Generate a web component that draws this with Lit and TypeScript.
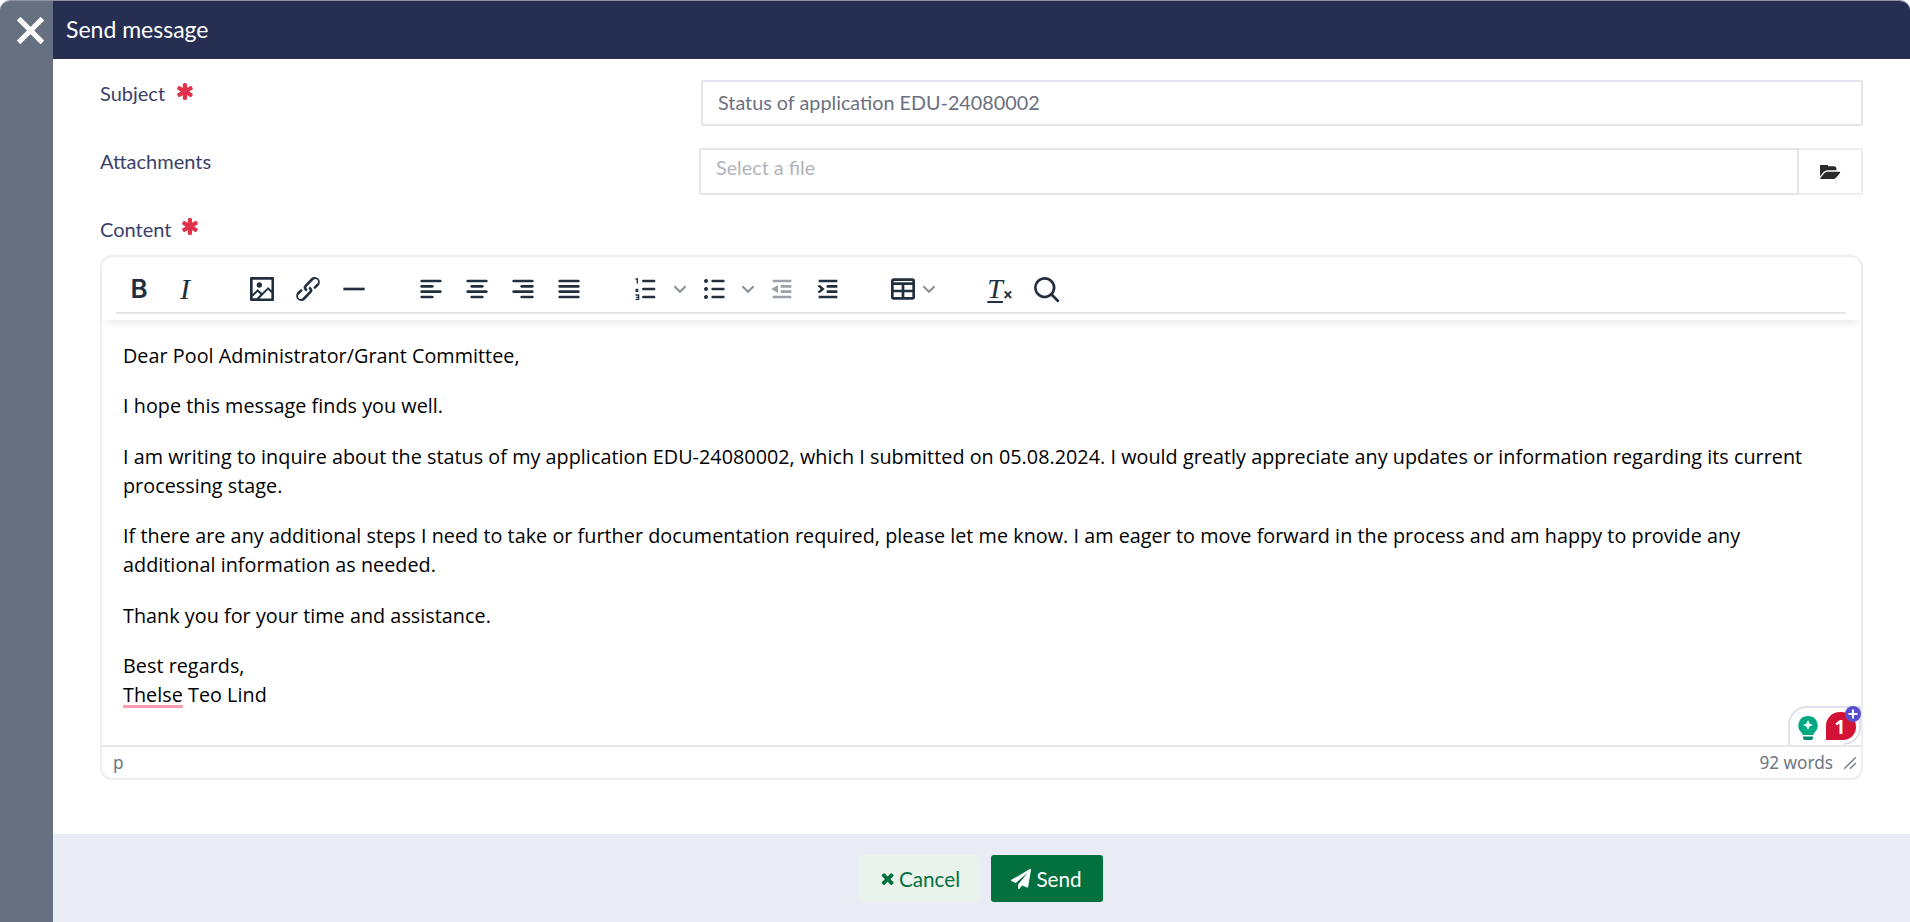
import { LitElement, html, css, svg } from "lit";
import { customElement } from "lit/decorators.js";

const p = (d: string, cls = "") => html`<svg class="ic ${cls}" viewBox="0 0 24 24" width="32" height="32"><path d=${d}></path></svg>`;
const bars = (rows: [number, number, number][]) =>
  html`<svg class="ic" viewBox="0 0 24 24" width="32" height="32">${rows.map(([x, y, w]) => svg`<rect x=${x} y=${y} width=${w} height="2" rx="1"></rect>`)}</svg>`;

const chev = html`<svg class="chev" viewBox="0 0 10 10" width="14" height="14"><path d="M1 3 L5 7 L9 3" fill="none" stroke="#8a9097" stroke-width="1.4"></path></svg>`;
const star = html`<svg class="star" viewBox="170 120 1460 1552" width="16" height="17"><path fill="#e0324b" d="M1546 1050q46 26 59.500 77.500t-12.500 97.500l-64 110q-26 46-77.500 59.500t-97.500-12.500l-266-153v307q0 52-38 90t-90 38h-128q-52 0-90-38t-38-90v-307l-266 153q-46 26-97.500 12.500t-77.500-59.500l-64-110q-26-46-12.500-97.500t59.500-77.500l266-154-266-154q-46-26-59.500-77.500t12.500-97.500l64-110q26-46 77.500-59.500t97.500 12.500l266 153v-307q0-52 38-90t90-38h128q52 0 90 38t38 90v307l266-153q46-26 97.500-12.500t77.500 59.500l64 110q26 46 12.500 97.500t-59.500 77.500l-266 154z"></path></svg>`;

@customElement("app-root")
export class AppRoot extends LitElement {
  static styles = css`
    :host { display: block; width: 1910px; height: 922px; background: #fff; overflow: hidden; font-family: Lato, "Noto Sans", sans-serif; }
    .window { display: flex; height: 922px; box-sizing: border-box; border-top: 1px solid #9094a6; border-radius: 10px 10px 0 0; overflow: hidden; }
    .strip { width: 53px; flex: none; background: #667080; display: flex; justify-content: center; padding: 16px 0 0 8px; box-sizing: border-box; }
    .strip svg { width: 27px; height: 27px; }
    .main { flex: 1; min-width: 0; display: flex; flex-direction: column; }
    .head { height: 58px; flex: none; background: #262e52; color: #fff; font-size: 23px; line-height: 56px; padding-left: 13px; }
    .body { flex: 1; padding: 21px 47px 0; display: flex; flex-direction: column; }
    .row { display: grid; grid-template-columns: 601px 1fr; }
    .row + .row { margin-top: 22px; }
    .label { color: #3a4168; font-size: 20px; line-height: 24px; display: flex; align-items: flex-start; }
    .row .label { margin-top: 1px; }
    .star { margin-left: 12px; margin-top: 2px; flex: none; }
    .input { height: 46px; box-sizing: border-box; border: 2px solid #e2e5ec; border-radius: 2px; padding-left: 15px; color: #6b7080; font-size: 19.800px; line-height: 40px; }
    .file { display: flex; height: 47px; margin-left: -2px; }
    .file .input { flex: 1; height: 47px; border-radius: 2px 0 0 2px; color: #b0b3ba; line-height: 34px; }
    .file .btn { width: 64px; box-sizing: border-box; border: 2px solid #ebedf5; border-left: 0; border-radius: 0 2px 2px 0; display: flex; align-items: center; justify-content: center; }
    .content-label { margin-top: 22px; height: 38px; }
    .content-label .star { margin-left: 11px; margin-top: 1px; }
    .editor { position: relative; height: 525px; box-sizing: border-box; border: 2px solid #eeeeee; border-radius: 12px; display: flex; flex-direction: column; }
    .tbar { height: 63px; flex: none; box-shadow: 0 6px 8px -4px rgba(30,40,50,.12); padding: 0 15px 0 14px; position: relative; border-radius: 10px 10px 0 0; }
    .tools { display: flex; height: 57px; box-sizing: border-box; border-bottom: 2px solid #e4e6e8; padding-top: 8px; align-items: center; }
    .group { display: flex; align-items: center; margin-right: 31px; }
    .group.tg { margin-left: -2px; margin-right: 37px; }
    .b { width: 46px; height: 46px; display: flex; align-items: center; justify-content: center; color: #222f3e; flex: none; }
    .b.dim { color: #9ba1a8; }
    .ic { fill: currentColor; display: block; }
    .chev { display: block; flex: none; width: 22px; }
    .tbl { margin-right: -8px; }
    .glyph-b { font: 600 26px Inter, sans-serif; }
    .glyph-i { font: italic 400 30px "Liberation Serif", serif; }
    .glyph-t { font: italic 400 28px "Liberation Serif", serif; text-decoration: underline; text-underline-offset: 3px; text-decoration-thickness: 2px; }
    .glyph-x { font: 700 17px "Noto Sans", sans-serif; align-self: flex-end; margin: 0 0 6px 0; }
    .text { flex: 1; padding: 21px 36px 0 21px; color: #000; font-family: "Open Sans", "Noto Sans", sans-serif; font-size: 19.750px; letter-spacing: .04px; line-height: 29px; overflow: hidden; }
    .text p { margin: 0 0 21.400px; }
    .sp { text-decoration: underline; text-decoration-color: #ff9ab0; text-decoration-thickness: 3px; text-underline-offset: 3px; }
    .status { height: 33px; box-sizing: border-box; flex: none; border-top: 2px solid #e4e6e8; display: flex; justify-content: space-between; align-items: center; padding: 0 4px 0 11px; color: #6d7583; font: 17.200px "Noto Sans", sans-serif; }
    .status .right { display: flex; align-items: center; gap: 10px; }
    .gram { position: absolute; left: 1686px; top: 449px; width: 73px; height: 39px; }
    .foot { height: 88px; flex: none; background: #e9ecf4; display: flex; justify-content: center; gap: 11px; padding: 21px 2px 0 0; box-sizing: border-box; }
    .fb { height: 47px; box-sizing: border-box; border-radius: 3px; display: flex; align-items: center; font-size: 20.700px; gap: 5px; }
    .cancel { width: 121px; background: #e9f3ec; color: #03713f; justify-content: center; padding-left: 3px; }
    .send { width: 112px; background: #03713f; color: #fff; justify-content: center; }
    .fb svg { fill: currentColor; display: block; }
  `;

  render() {
    return html`<div class="window">
      <div class="strip"><svg viewBox="0 0 24 24"><path d="M3 3L21 21M21 3L3 21" stroke="#fff" stroke-width="4.500" stroke-linecap="square"></path></svg></div>
      <div class="main">
        <div class="head">Send message</div>
        <div class="body">
          <div class="row"><div class="label">Subject ${star}</div><div class="input">Status of application EDU-24080002</div></div>
          <div class="row"><div class="label">Attachments</div><div class="file"><div class="input">Select a file</div><div class="btn">
            <svg viewBox="0 256 1920 1280" width="21" height="14"><path fill="#2e2a2b" d="M1845 931q0 35-53 93l-336 396q-43 51-120.500 86.500t-143.500 35.500h-1088q-34 0-60.500-13t-26.500-43q0-35 53-93l336-396q43-51 120.500-86.500t143.500-35.500h1088q34 0 60.500 13t26.500 43zm-343-344v160h-832q-94 0-197 47.500t-164 119.500l-337 396-5 6q0-4-.5-12.500t-.5-12.500v-960q0-92 66-158t158-66h320q92 0 158 66t66 158v32h544q92 0 158 66t66 158z"></path></svg>
          </div></div></div>
          <div class="label content-label">Content ${star}</div>
          <div class="editor">
            <div class="tbar"><div class="tools">
              <div class="group"><div class="b"><span class="glyph-b">B</span></div><div class="b"><span class="glyph-i">I</span></div></div>
              <div class="group">
                <div class="b">${p("m5 15.7 3.3-3.2c.3-.3.7-.3 1 0L12 15l4.100-4c.3-.4.8-.4 1 0l2 1.900V5H5v10.700ZM5 18v1h3l2.800-2.900-2-2L5 17.900Zm14-3-2.500-2.400-6.400 6.500H19v-4ZM4 3h16c.6 0 1 .4 1 1v16c0 .6-.4 1-1 1H4a1 1 0 0 1-1-1V4c0-.6.4-1 1-1Zm6 8a2 2 0 1 0 0-4 2 2 0 0 0 0 4Z")}</div>
                <div class="b">${p("M6.200 12.300a1 1 0 0 1 1.400 1.400l-2 2a2 2 0 1 0 2.600 2.800l4.800-4.800a1 1 0 0 0 0-1.400 1 1 0 1 1 1.400-1.300 2.900 2.900 0 0 1 0 4L9.600 20a3.900 3.900 0 0 1-5.500-5.500l2-2Zm11.600-.6a1 1 0 0 1-1.400-1.400l2-2a2 2 0 1 0-2.600-2.800L11 10.300a1 1 0 0 0 0 1.400A1 1 0 1 1 9.600 13a2.900 2.900 0 0 1 0-4L14.400 4a3.900 3.900 0 0 1 5.500 5.500l-2 2Z")}</div>
                <div class="b">${p("M4 11h16v2H4z")}</div>
              </div>
              <div class="group">
                <div class="b">${bars([[4, 5, 16], [4, 9, 10], [4, 13, 16], [4, 17, 10]])}</div>
                <div class="b">${bars([[4, 5, 16], [7, 9, 10], [4, 13, 16], [7, 17, 10]])}</div>
                <div class="b">${bars([[4, 5, 16], [10, 9, 10], [4, 13, 16], [10, 17, 10]])}</div>
                <div class="b">${bars([[4, 5, 16], [4, 9, 16], [4, 13, 16], [4, 17, 16]])}</div>
              </div>
              <div class="group">
                <div class="b">${p("M10 17h8c.6 0 1 .4 1 1s-.4 1-1 1h-8a1 1 0 0 1 0-2Zm0-6h8c.6 0 1 .4 1 1s-.4 1-1 1h-8a1 1 0 0 1 0-2Zm0-6h8c.6 0 1 .4 1 1s-.4 1-1 1h-8a1 1 0 1 1 0-2ZM6 4v3.500c0 .3-.2.500-.5.500a.5.500 0 0 1-.5-.5V5h-.5a.5.500 0 0 1 0-1H6Zm-1 8.750H4.500a.5.500 0 0 1 0-1h1.300c.3 0 .5.200.5.500v.8L5 13.250h1a.5.500 0 1 1 0 1H4.500a.5.500 0 0 1-.5-.5v-.8Zm2 4v3a.5.500 0 0 1-.5.500h-2a.5.500 0 0 1 0-1H6v-.5H5a.5.500 0 1 1 0-1h1V17H4.500a.5.500 0 0 1 0-1h2c.3 0 .5.200.5.500Z")}</div>
                ${chev}
                <div class="b">${p("M11 5h8c.6 0 1 .4 1 1s-.4 1-1 1h-8a1 1 0 0 1 0-2Zm0 6h8c.6 0 1 .4 1 1s-.4 1-1 1h-8a1 1 0 0 1 0-2Zm0 6h8c.6 0 1 .4 1 1s-.4 1-1 1h-8a1 1 0 0 1 0-2ZM4.500 6c0-.4.100-.8.400-1 .3-.4.700-.5 1.100-.5.400 0 .8.100 1 .4.400.3.500.7.500 1.100 0 .4-.1.800-.4 1-.3.400-.7.500-1.100.5-.4 0-.8-.1-1-.4-.4-.3-.5-.7-.5-1.100Zm0 6c0-.4.100-.8.400-1 .3-.4.700-.5 1.100-.5.400 0 .8.100 1 .4.400.3.500.7.500 1.100 0 .4-.1.800-.4 1-.3.400-.7.500-1.100.5-.4 0-.8-.1-1-.4-.4-.3-.5-.7-.5-1.100Zm0 6c0-.4.100-.8.400-1 .3-.4.700-.5 1.100-.5.400 0 .8.100 1 .4.400.3.500.7.500 1.100 0 .4-.1.800-.4 1-.3.400-.7.500-1.100.5-.4 0-.8-.1-1-.4-.4-.3-.5-.7-.5-1.100Z")}</div>
                ${chev}
                <div class="b dim">${p("M5 5h14v2H5zM11 9h8v2h-8zM11 13h8v2h-8zM5 17h14v2H5zM9 9v6l-5-3z")}</div>
                <div class="b">${p("M5 5h14v2H5zM11 9h8v2h-8zM11 13h8v2h-8zM5 17h14v2H5zM4 9.500L6 9l3.500 3L6 15l-2-.5L6.500 12z")}</div>
              </div>
              <div class="group tg">
                <div class="b tbl">${p("M19 4a2 2 0 0 1 2 2v12a2 2 0 0 1-2 2H5a2 2 0 0 1-2-2V6c0-1.100.9-2 2-2h14Zm0 2H5v1h14V6ZM11 9H5v3.500h6V9Zm8 0h-6v3.500h6V9Zm-8 5.500H5V18h6v-3.500Zm8 0h-6V18h6v-3.500Z")}</div>
                ${chev}
              </div>
              <div class="group">
                <div class="b"><span class="glyph-t">T</span><span class="glyph-x">×</span></div>
                <div class="b">${p("M16 17.300a8 8 0 1 1 1.400-1.400l4.300 4.400a1 1 0 0 1-1.400 1.400l-4.400-4.400Zm-5-.3a6 6 0 1 0 0-12 6 6 0 0 0 0 12Z")}</div>
              </div>
            </div></div>
            <div class="text">
              <p>Dear Pool Administrator/Grant Committee,</p>
              <p>I hope this message finds you well.</p>
              <p>I am writing to inquire about the status of my application EDU-24080002, which I submitted on 05.08.2024. I would greatly appreciate any updates or information regarding its current processing stage.</p>
              <p>If there are any additional steps I need to take or further documentation required, please let me know. I am eager to move forward in the process and am happy to provide any additional information as needed.</p>
              <p>Thank you for your time and assistance.</p>
              <p>Best regards,<br><span class="sp">Thelse</span> Teo Lind</p>
            </div>
            <div class="status"><span>p</span><span class="right">92 words
              <svg viewBox="0 0 12 12" width="14" height="14"><path d="M11 1L1 11M11 6L6 11" stroke="#7a818c" stroke-width="1.300"></path></svg></span></div>
            <svg class="gram" viewBox="0 0 73 39">
              <path d="M1 39V19A18 18 0 0 1 19 1H72V22A16 16 0 0 1 56 38" fill="#fff" stroke="#d5d9e6" stroke-width="1.500"></path>
              <path d="M20 10a9.500 9.500 0 0 1 6 17l-.5 2h-11l-.5-2a9.500 9.500 0 0 1 6-17Z" fill="#02a884"></path>
              <path d="M15 30.500h10v1.500a2 2 0 0 1-2 2h-6a2 2 0 0 1-2-2z" fill="#028a70"></path>
              <path d="M20 14l1.600 3.400 3.400 1.600-3.400 1.600L20 24l-1.600-3.400L15 19l3.400-1.600z" fill="#e6fbf5"></path>
              <path d="M52 6h1a15 15 0 0 1 15 15a13 13 0 0 1-13 13H38V20A14 14 0 0 1 52 6Z" fill="#d31236"></path>
              <text x="52" y="28" text-anchor="middle" fill="#fff" font-family="Noto Sans" font-weight="700" font-size="19">1</text>
              <circle cx="65" cy="8" r="8" fill="#5b4fd0"></circle>
              <path d="M65 3.500v9M60.500 8h9" stroke="#fff" stroke-width="2"></path>
            </svg>
          </div>
        </div>
        <div class="foot">
          <div class="fb cancel"><svg viewBox="250 250 1260 1300" width="13" height="13"><path d="M1490 1322q0 40-28 68l-136 136q-28 28-68 28t-68-28l-294-294-294 294q-28 28-68 28t-68-28l-136-136q-28-28-28-68t28-68l294-294-294-294q-28-28-28-68t28-68l136-136q28-28 68-28t68 28l294 294 294-294q28-28 68-28t68 28l136 136q28 28 28 68t-28 68l-294 294 294 294q28 28 28 68z"></path></svg>Cancel</div>
          <div class="fb send"><svg viewBox="0 0 1792 1792" width="20" height="20"><path d="M1764 11q33 24 27 64l-256 1536q-5 29-32 45-14 8-31 8-11 0-24-5l-453-185-242 295q-18 23-49 23-13 0-22-4-19-7-30.500-23.500t-11.500-36.500v-349l864-1059-1069 925-395-162q-37-14-40-55-2-40 32-59l1664-960q15-9 32-9 20 0 36 11z"></path></svg>Send</div>
        </div>
      </div>
    </div>`;
  }
}
